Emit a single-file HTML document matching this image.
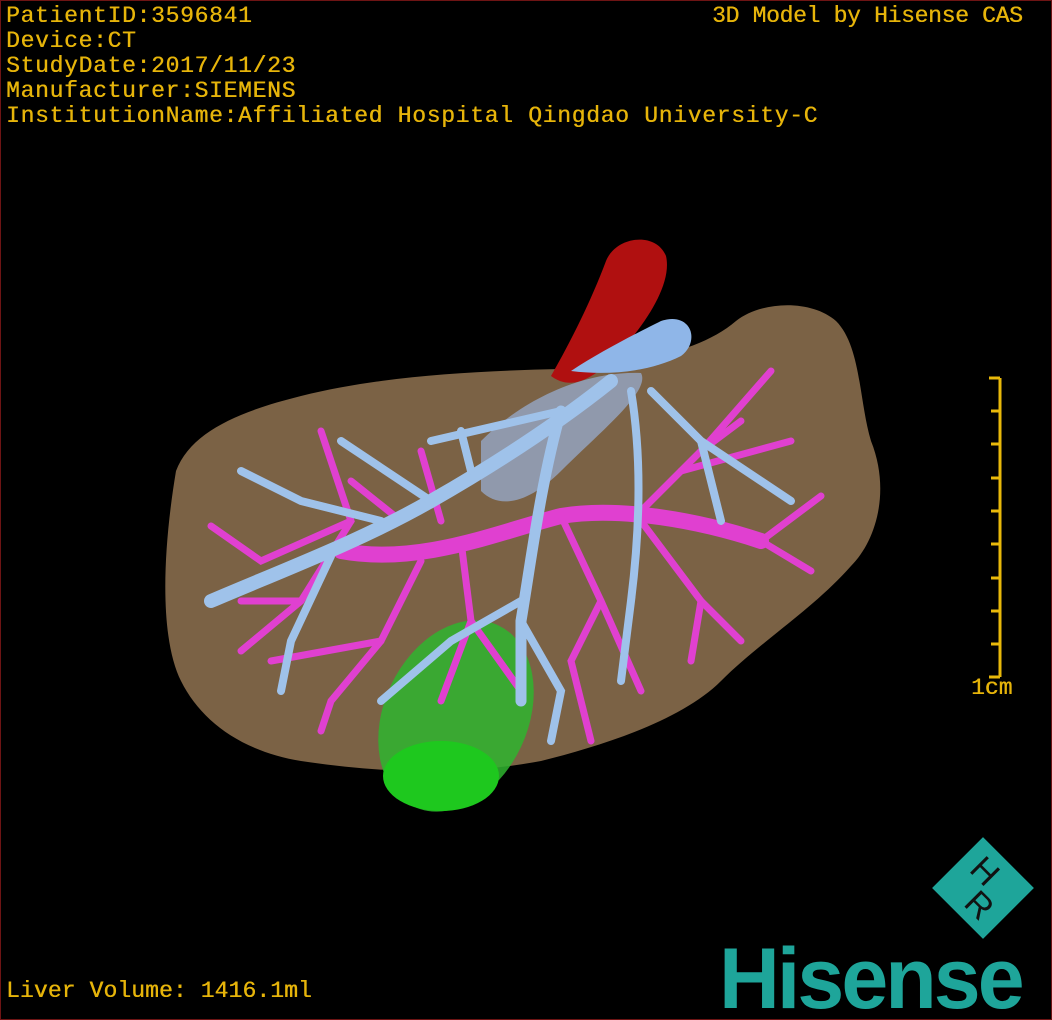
<!DOCTYPE html>
<html><head><meta charset="utf-8">
<style>
html,body{margin:0;padding:0;background:#000;}
#wrap{position:relative;width:1050px;height:1018px;border:1px solid #6e1414;background:#000;overflow:hidden;}
.t{position:absolute;color:#e6b40a;font-family:"Liberation Mono",monospace;font-size:23px;letter-spacing:0.7px;white-space:pre;line-height:25px;text-shadow:0.4px 0 0 #e6b40a;}
svg{position:absolute;left:0;top:0;}
.logo{position:absolute;left:718px;top:935px;font-family:"Liberation Sans",sans-serif;font-weight:bold;font-size:86px;color:#1ea59a;letter-spacing:-3px;line-height:86px;transform:scaleX(0.98);transform-origin:left;}
.rh{position:absolute;left:946px;top:851px;width:72px;height:72px;background:#1ea59a;transform:rotate(-45deg);font-family:"Liberation Sans",sans-serif;font-size:34px;color:#111;}
</style></head><body><div id="wrap">
<svg width="1052" height="1020" viewBox="0 0 1052 1020">
<path d="M175 470 C190 430 240 410 300 395 C380 375 470 370 560 368 C640 362 700 350 735 320 C760 300 810 298 835 320 C860 345 858 400 870 440 C890 490 875 540 850 565 C810 610 760 640 720 680 C680 720 600 745 540 760 C460 775 380 772 300 760 C240 750 200 720 180 680 C160 640 160 560 175 470 Z" fill="#7b6245"/>
<path d="M550 375 C570 340 590 300 605 260 C615 235 655 230 665 255 C672 285 640 330 610 360 C590 378 570 390 550 375 Z" fill="#b01010"/>
<path d="M570 370 C600 350 640 330 660 320 C690 310 700 340 680 355 C650 370 610 375 570 370 Z" fill="#8fb6e8"/>
<path d="M480 440 C520 400 580 370 640 372 C650 390 600 430 560 470 C530 500 500 510 480 490 Z" fill="#9ab0d8" opacity="0.7"/>
<ellipse cx="455" cy="715" rx="72" ry="100" transform="rotate(25 455 715)" fill="#2fb52f" opacity="0.85"/>
<ellipse cx="440" cy="775" rx="58" ry="35" fill="#1ec81e"/>
<g stroke="#e040d0" stroke-width="7" fill="none" stroke-linecap="round">
<path d="M340 550 C420 565 500 530 560 515 C620 505 700 520 760 540" stroke-width="16"/>
<path d="M320 430 L350 520 L300 600 L240 650"/><path d="M350 520 L260 560 L210 525"/>
<path d="M420 560 L380 640 L330 700 L320 730"/><path d="M380 640 L270 660"/>
<path d="M460 540 L470 620 L440 700"/><path d="M470 620 L520 690"/>
<path d="M560 515 L600 600 L640 690"/><path d="M600 600 L570 660 L590 740"/>
<path d="M640 520 L700 600 L740 640"/><path d="M700 600 L690 660"/>
<path d="M640 510 L700 450 L770 370"/><path d="M700 450 L740 420"/><path d="M680 470 L790 440"/>
<path d="M760 540 L820 495"/><path d="M760 540 L810 570"/>
<path d="M420 450 L440 520"/><path d="M350 480 L400 520"/><path d="M240 600 L300 600"/>
</g>
<g stroke="#9fc2ea" stroke-width="8" fill="none" stroke-linecap="round">
<path d="M610 380 C560 420 500 460 430 500 C360 540 280 570 210 600" stroke-width="14"/>
<path d="M560 410 C540 480 530 560 520 620 L520 700" stroke-width="11"/>
<path d="M630 390 C640 450 640 520 630 600 L620 680"/>
<path d="M650 390 L700 440 L760 480 L790 500"/><path d="M700 440 L720 520"/>
<path d="M430 500 L340 440"/><path d="M470 470 L460 430"/><path d="M380 520 L300 500 L240 470"/>
<path d="M330 555 L290 640 L280 690"/><path d="M520 600 L450 640 L380 700"/>
<path d="M520 620 L560 690 L550 740"/><path d="M560 410 L430 440"/>
</g>
<g stroke="#e8b80a" stroke-width="3">
<line x1="999" y1="377" x2="999" y2="676"/>
<line x1="988" y1="377" x2="999" y2="377"/><line x1="988" y1="676" x2="999" y2="676"/>
<line x1="990" y1="410" x2="999" y2="410"/><line x1="990" y1="443" x2="999" y2="443"/>
<line x1="990" y1="477" x2="999" y2="477"/><line x1="990" y1="510" x2="999" y2="510"/>
<line x1="990" y1="543" x2="999" y2="543"/><line x1="990" y1="577" x2="999" y2="577"/>
<line x1="990" y1="610" x2="999" y2="610"/><line x1="990" y1="643" x2="999" y2="643"/>
</g>
</svg>
<div class="t" style="left:5px;top:3px;">PatientID:3596841
Device:CT
StudyDate:2017/11/23
Manufacturer:SIEMENS
InstitutionName:Affiliated Hospital Qingdao University-C</div>
<div class="t" style="left:711px;top:3px;letter-spacing:-0.3px;">3D Model by Hisense CAS</div>
<div class="t" style="left:970px;top:675px;letter-spacing:0;">1cm</div>
<div class="t" style="left:5px;top:978px;letter-spacing:0.1px;">Liver Volume: 1416.1ml</div>
<div class="rh"><span style="position:absolute;left:8px;top:26px;transform:rotate(90deg);">R</span><span style="position:absolute;left:36px;top:6px;transform:rotate(90deg);">H</span></div>
<div class="logo">Hisense</div>
</div></body></html>
